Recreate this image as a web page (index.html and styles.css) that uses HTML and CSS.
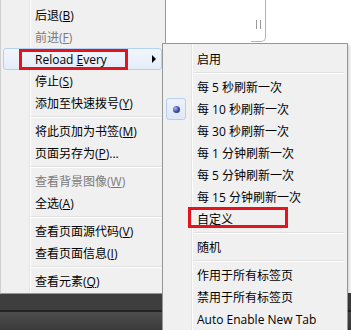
FILE: index.html
```html
<!DOCTYPE html>
<html lang="zh-CN">
<head>
  <meta charset="UTF-8" />
  <title>Reload Every</title>
  <link rel="stylesheet" href="styles.css">
</head>
<body>
  <div class="screen">
    <div class="page">
      <div class="viewport">
        <div class="splitter"><span class="grip"></span></div>
      </div>
      <div class="taskbar">
        <div class="taskbar-top"></div>
        <div class="taskbar-bottom"></div>
      </div>
    </div>

    <!-- context menu -->
    <ul class="menu main-menu">
      <li class="item">后退(<u>B</u>)</li>
      <li class="item disabled">前进(<u>F</u>)</li>
      <li class="item hover has-sub">Reload <u>E</u>very<span class="arrow"></span><span class="mark mark-reload"></span></li>
      <li class="item">停止(<u>S</u>)</li>
      <li class="item">添加至快速拨号(<u>Y</u>)</li>
      <li class="sep"></li>
      <li class="item">将此页加为书签(<u>M</u>)</li>
      <li class="item">页面另存为(<u>P</u>)...</li>
      <li class="sep"></li>
      <li class="item disabled">查看背景图像(<u>W</u>)</li>
      <li class="item">全选(<u>A</u>)</li>
      <li class="sep"></li>
      <li class="item">查看页面源代码(<u>V</u>)</li>
      <li class="item">查看页面信息(<u>I</u>)</li>
      <li class="sep"></li>
      <li class="item">查看元素(<u>Q</u>)</li>
    </ul>

    <!-- Reload Every submenu -->
    <ul class="menu sub-menu">
      <li class="item">启用</li>
      <li class="sep"></li>
      <li class="item">每 5 秒刷新一次</li>
      <li class="item checked"><span class="radio"><span class="dot"></span></span>每 10 秒刷新一次</li>
      <li class="item">每 30 秒刷新一次</li>
      <li class="item">每 1 分钟刷新一次</li>
      <li class="item">每 5 分钟刷新一次</li>
      <li class="item">每 15 分钟刷新一次</li>
      <li class="item">自定义<span class="mark mark-custom"></span></li>
      <li class="sep"></li>
      <li class="item">随机</li>
      <li class="sep"></li>
      <li class="item">作用于所有标签页</li>
      <li class="item">禁用于所有标签页</li>
      <li class="item">Auto Enable New Tab</li>
    </ul>
  </div>
</body>
</html>
```

FILE: styles.css
```css
body {
  margin: 0;
  background: #fff;
  font-family: "Open Sans", "Noto Sans CJK SC", sans-serif;
  font-size: 12px;
  color: #000;
}
.screen {
  position: relative;
  width: 351px;
  height: 330px;
  overflow: hidden;
  background: #fff;
}
.page {
  display: flex;
  flex-direction: column;
  height: 100%;
}
.viewport {
  height: 293px;
  background: #fff;
}
.splitter {
  width: 14px;
  height: 41px;
  margin-left: 251px;
  border-right: 1px solid #b4b4b4;
  border-bottom: 1px solid #b4b4b4;
  border-radius: 0 0 5px 0;
  display: flex;
  align-items: center;
  justify-content: center;
}
.grip {
  width: 3px;
  height: 9px;
  margin-top: 8px;
  border-left: 1px solid #9a9a9a;
  border-right: 1px solid #9a9a9a;
}
.taskbar {
  flex: 1;
  display: flex;
  flex-direction: column;
}
.taskbar-top {
  height: 17px;
  background: #3e3e3e;
  border-bottom: 2px solid #242424;
}
.taskbar-bottom {
  flex: 1;
  background: linear-gradient(#4d4d4d, #3b3b3b);
}

/* menus */
.menu {
  list-style: none;
  margin: 0;
  position: absolute;
  box-sizing: border-box;
  background:
    linear-gradient(to right, transparent 28px, #e2e3e3 28px, #e2e3e3 29px, #fff 29px, #fff 30px, transparent 30px),
    #f0f0f0;
}
.main-menu {
  left: 0;
  top: 0;
  width: 166px;
  padding: 4px 0 1px;
  border: 1px solid #979797;
  border-top: none;
  border-left-color: #cfcfcf;
}
.sub-menu {
  left: 162px;
  top: 43px;
  width: 186px;
  padding: 4px 0 8px;
  border: 1px solid #979797;
  box-shadow: 2px 2px 2px rgba(0, 0, 0, 0.15);
}
.item {
  position: relative;
  height: 22px;
  line-height: 22px;
  margin: 0 3px 0 2px;
  padding-left: 31px;
  white-space: nowrap;
  border: 1px solid transparent;
  box-sizing: border-box;
}
.item.disabled {
  color: #7a7a7a;
}
.item.hover {
  border-color: #b3d1f5;
  border-radius: 3px;
  background: linear-gradient(#f2f6fc, #e4ecf8);
}
.arrow {
  position: absolute;
  right: 5px;
  top: 6px;
  border-left: 4px solid #000;
  border-top: 4px solid transparent;
  border-bottom: 4px solid transparent;
}
.sep {
  height: 1px;
  margin: 2px 3px 2px 30px;
  background: #e0e0e0;
  border-bottom: 1px solid #fff;
}
.radio {
  position: absolute;
  left: 0;
  top: -1px;
  width: 20px;
  height: 22px;
  box-sizing: border-box;
  border: 1px solid #b4cff0;
  border-radius: 3px;
  background: linear-gradient(#eef3fb, #dfe8f6);
  display: flex;
  align-items: center;
  justify-content: center;
}
.dot {
  width: 7px;
  height: 7px;
  border-radius: 50%;
  background: radial-gradient(circle at 35% 35%, #a9b6ee, #3a48a8 55%, #1b2470);
}

/* red annotation boxes */
.mark {
  position: absolute;
  border: 3px solid #e3141c;
  box-sizing: border-box;
}
.mark-reload {
  left: 15px;
  top: 0;
  width: 109px;
  height: 21px;
}
.mark-custom {
  left: 22px;
  top: -2px;
  width: 100px;
  height: 21px;
}
```
